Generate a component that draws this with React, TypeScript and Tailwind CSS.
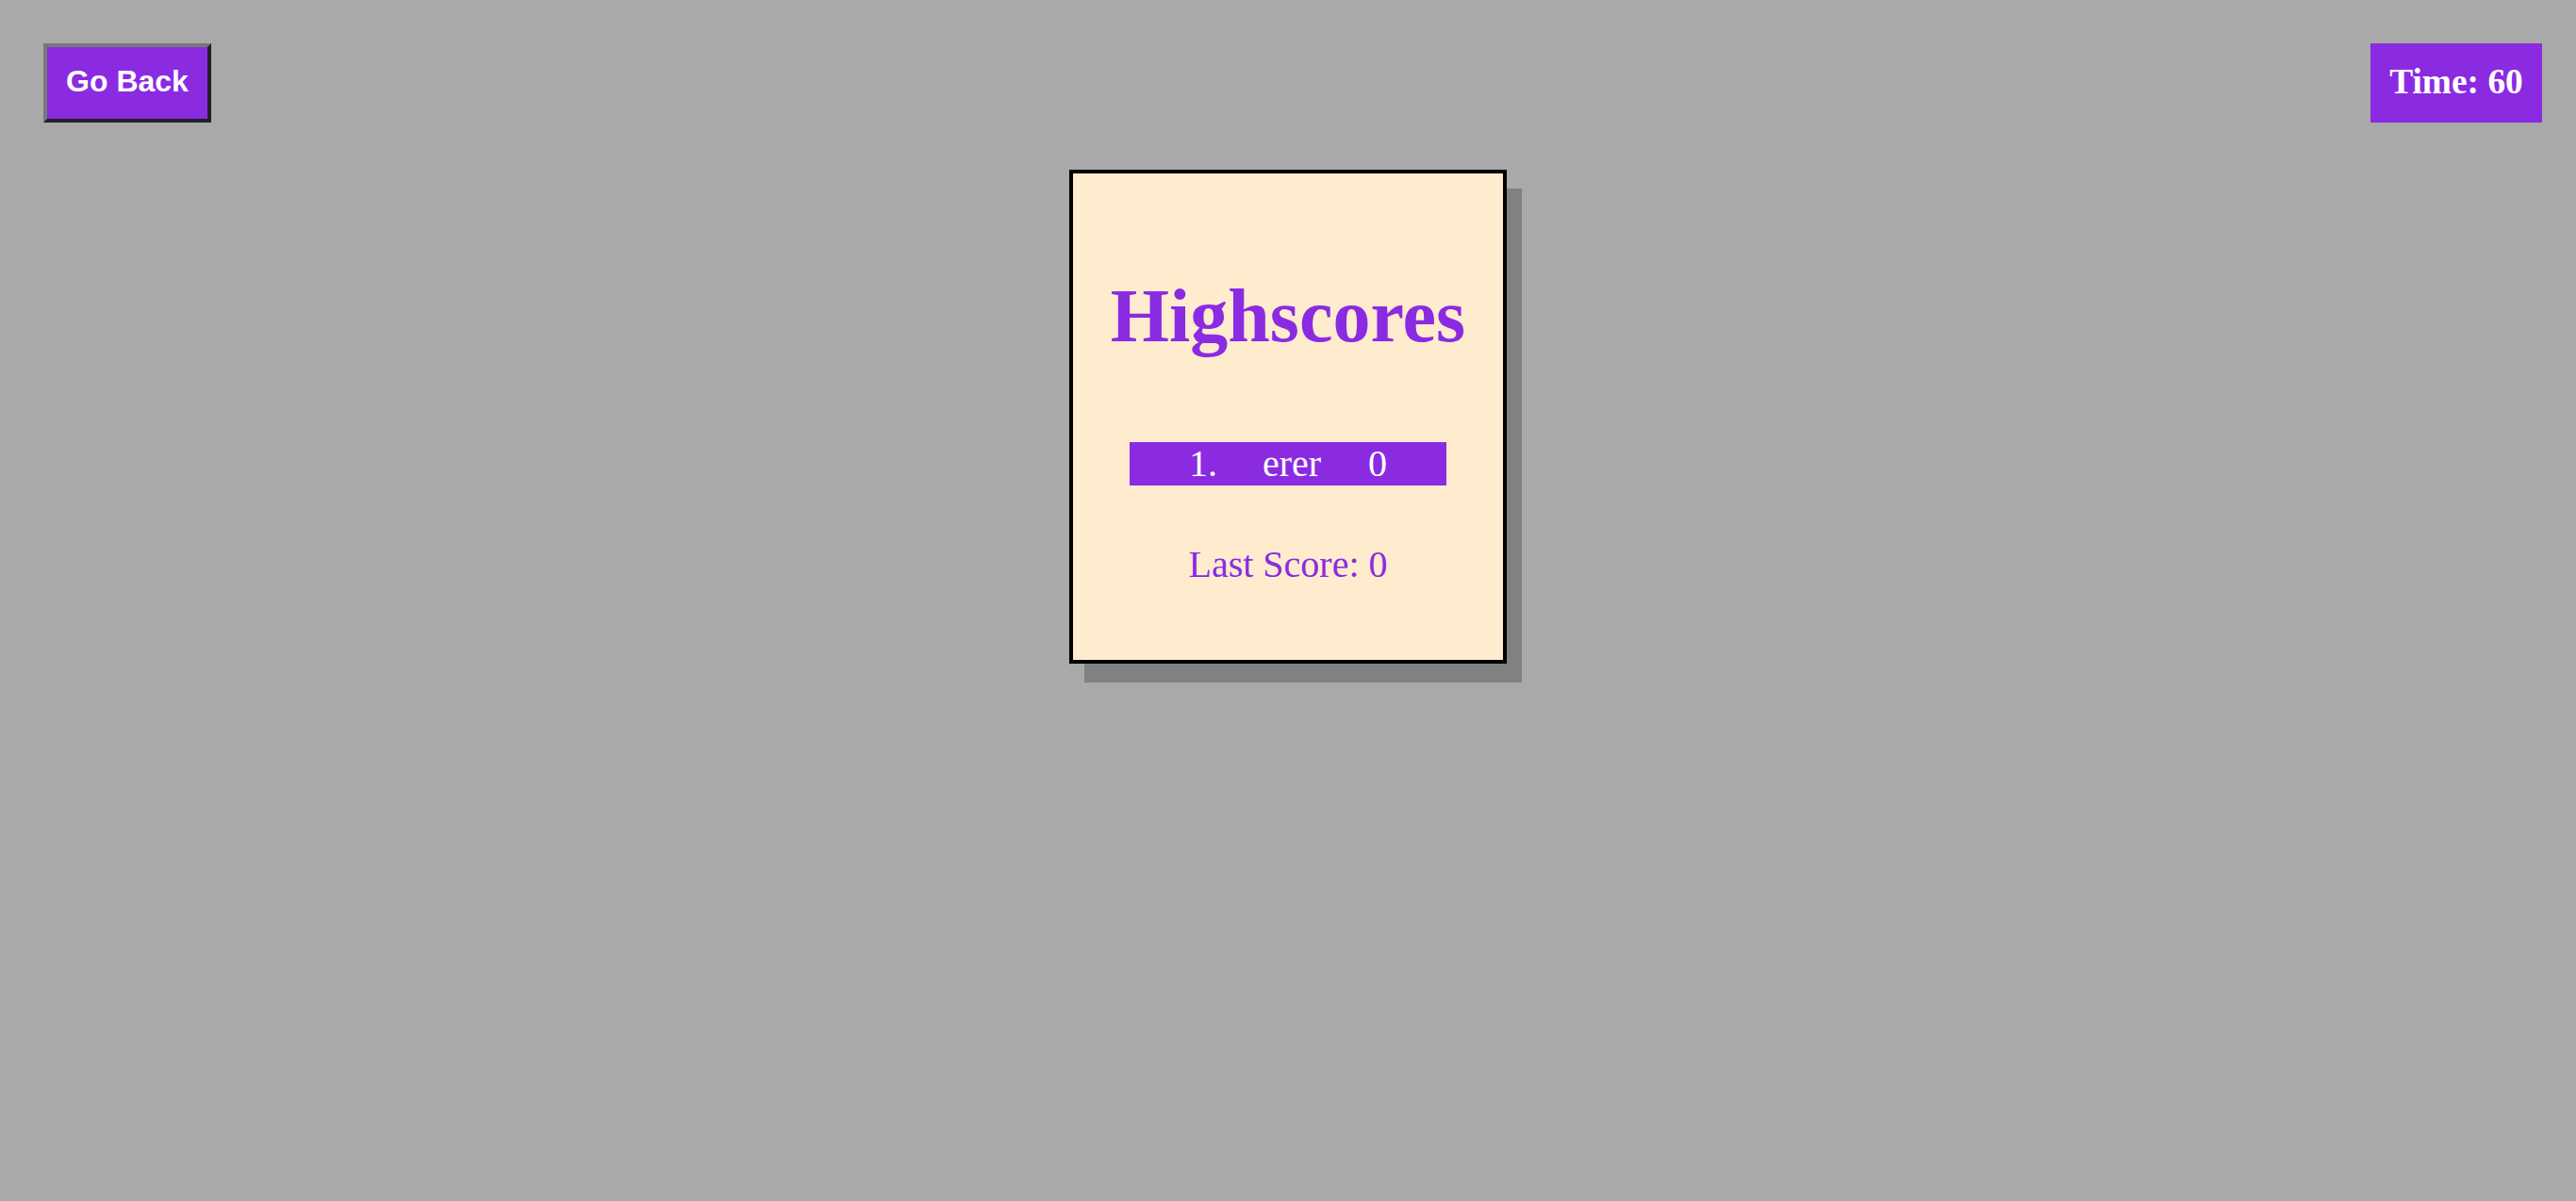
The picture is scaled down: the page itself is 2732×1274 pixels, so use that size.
export default function App() {
  const scores = [{ rank: 1, name: 'erer', score: 0 }];

  return (
    <div className="min-h-screen bg-[#a9a9a9] pt-[46px]" style={{ fontFamily: '"Liberation Serif", serif' }}>
      <div className="flex items-start justify-between pl-[46px] pr-[36px]">
        <button className="flex h-[84px] w-[178px] items-center justify-center border-4 border-t-[#777777] border-l-[#777777] border-b-[#222222] border-r-[#222222] bg-[#8a2be2] pb-[3px] text-[32px] font-bold leading-[37px] text-white [font-family:'Liberation_Sans',Arial,sans-serif]">
          Go Back
        </button>
        <div className="flex h-[84px] w-[182px] items-center justify-center bg-[#8a2be2] pb-[3px] text-[37.4px] font-bold leading-[43px] text-white">
          Time: 60
        </div>
      </div>

      <div className="mx-auto mt-[50px] flex h-[524px] w-[464px] flex-col items-center border-4 border-black bg-[#ffebcd] pt-[105px] shadow-[16px_20px_0_#818181]">
        <h1 className="text-[80px] font-bold leading-[92px] text-[#8a2be2]">Highscores</h1>

        <div className="mt-[88px] flex w-[336px] flex-col">
          {scores.map((s) => (
            <div
              key={s.rank}
              className="flex h-[46px] items-center justify-center gap-[48px] bg-[#8a2be2] text-[40px] leading-[46px] text-white"
            >
              <span>{s.rank}.</span>
              <span>{s.name}</span>
              <span className="pl-[2px]">{s.score}</span>
            </div>
          ))}
        </div>

        <p className="mt-[61px] text-[40px] leading-[46px] text-[#8a2be2]">Last Score: 0</p>
      </div>
    </div>
  );
}
